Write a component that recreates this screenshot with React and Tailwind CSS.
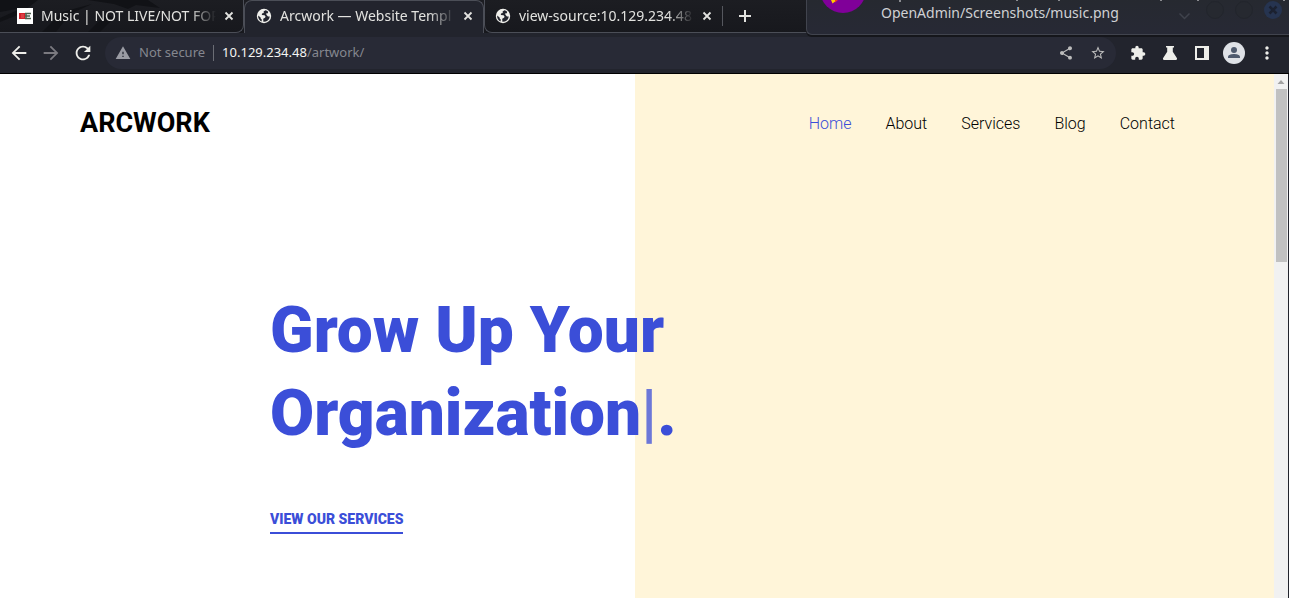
import React from "react";
import {
  MdArrowBack,
  MdArrowForward,
  MdRefresh,
  MdWarning,
  MdShare,
  MdStarBorder,
  MdExtension,
  MdMoreVert,
} from "react-icons/md";

function Globe() {
  return (
    <svg viewBox="0 0 16 16" className="size-4 shrink-0" aria-hidden="true">
      <circle cx="8" cy="8" r="7.2" fill="#f0f0ec" />
      <path
        d="M9.4 2.200 7.600 3.600 7.800 5 6 5.400 5.800 7 8.600 7.200 9.600 8.800 9 9.800 7.200 10.800 7.400 13.800A6 6 0 0 0 13.800 8.400L12 8.600 10.600 7 10 5.600 11.800 5.200 12.200 3.700A6 6 0 0 0 9.400 2.200ZM2.200 7.400A6 6 0 0 0 5.600 13.400L5.800 11.400 4.800 10.800 4.600 9.400Z"
        fill="#22242d"
      />
    </svg>
  );
}

function Favicon() {
  return (
    <svg viewBox="0 0 16 16" className="size-4 shrink-0" aria-hidden="true">
      <rect width="16" height="16" fill="#fff" />
      <path d="M2 5h6v6H2z" fill="#d3222a" />
      <path d="M4 7h3M4 9h3" stroke="#e77a7a" strokeWidth=".7" />
      <path d="M8 5.500h6M8 8h5M8 10.500h6M9 5v6" stroke="#4b5f4d" strokeWidth="1.500" />
    </svg>
  );
}

function Tab({ title, icon, active, className }) {
  return (
    <div
      className={
        "flex h-full items-center " +
        (active
          ? "rounded-t-lg border-x border-t border-[#4b4e57] bg-[#22242d] pb-0.5 "
          : "border-b border-[#4b4e57] ") +
        className
      }
    >
      {icon}
      <button
        role="tab"
        aria-selected={active}
        className="ml-2 w-[175px] overflow-hidden text-left whitespace-nowrap mask-r-from-85%"
      >
        {title}
      </button>
      <button aria-label="Close tab" className="ml-2">
        <svg viewBox="0 0 10 10" className="size-2.5" aria-hidden="true">
          <path d="M1.500 1.500l7 7m0-7l-7 7" stroke="currentColor" strokeWidth="1.800" />
        </svg>
      </button>
    </div>
  );
}

function Notification() {
  return (
    <div
      role="status"
      className="absolute top-0 right-0 h-[35px] w-[483px] overflow-hidden rounded-bl-md border-b border-l border-[#41444e] bg-linear-to-b from-[#262930] to-[#272935] shadow-[0_2px_0_#15161b]"
    >
      <svg viewBox="0 0 483 34" className="absolute top-0 left-0 h-[34px] w-[483px]" aria-hidden="true">
        <circle cx="36" cy="-10" r="23" fill="#800099" />
        <path d="M24 0h6l-4.500 3.500z" fill="#ffcc00" />
        <path d="M28 0h3l-3 2.500z" fill="#f03a20" />
        <path d="M92 0h2v2h-2zM209 0h2v1h-2zM251 0h2v1h-2zM353 0h2v1h-2zM390 0h2v1h-2zM476 0h2v1h-2z" fill="#8a8b90" />
        <path d="M372.500 13.500l5 5 5-5" fill="none" stroke="#3f424c" strokeWidth="1.500" />
        <circle cx="408" cy="10" r="8.500" fill="#262930" stroke="#22252c" />
        <circle cx="437" cy="10" r="8.500" fill="#262930" stroke="#22252c" />
        <circle cx="466" cy="10" r="9" fill="#263450" />
        <path d="M462.500 6.500l7 7m0-7l-7 7" stroke="#1b2130" strokeWidth="2.500" />
      </svg>
      <p className="relative mt-[3px] ml-[74px] text-sm text-[#d0d1d4]">
        OpenAdmin/Screenshots/music.png
      </p>
    </div>
  );
}

function TabStrip() {
  return (
    <div role="tablist" className="relative flex h-[33px] bg-linear-to-b from-[#1c1d22] to-[#17181d] text-sm text-[#e2e2df]">
      <svg viewBox="0 0 244 32" className="absolute top-0 left-0 h-8 w-[244px]" aria-hidden="true">
        <path d="M0 0h38L20 14 0 22V18L22 8 0 12zM42 32L62 12 92 4 70 14 56 32zM88 0h60l12 8-24-3-8 4-14-5zM88 32l18-18 8 4-14 14z" fill="#111216" />
      </svg>
      <Tab title="Music | NOT LIVE/NOT FOR" icon={<Favicon />} active={false} className="relative w-[244px] shrink-0 rounded-br-lg border-r pl-[17px]" />
      <Tab title="Arcwork — Website Templ" icon={<Globe />} active className="w-[240px] shrink-0 pl-[11px]" />
      <Tab title="view-source:10.129.234.48" icon={<Globe />} active={false} className="w-[238px] shrink-0 rounded-bl-lg border-l pl-[10px]" />
      <div className="flex grow items-center border-b border-[#4b4e57]">
        <span className="h-5 w-px bg-[#55575e]" />
        <button aria-label="New tab" className="ml-4">
          <svg viewBox="0 0 12 12" className="size-3" aria-hidden="true">
            <path d="M0 6h12M6 0v12" stroke="currentColor" strokeWidth="2" />
          </svg>
        </button>
      </div>
    </div>
  );
}

function Toolbar() {
  return (
    <div className="flex h-[41px] items-center border-b border-black bg-[#22242d] pr-3 pl-2 text-[#eeeeea]">
      <button aria-label="Back"><MdArrowBack className="size-[22px]" /></button>
      <button aria-label="Forward" className="ml-2.5 text-[#7b7a80]"><MdArrowForward className="size-[22px]" /></button>
      <button aria-label="Reload" className="ml-2.5"><MdRefresh className="size-[22px]" /></button>
      <div className="ml-[11px] flex h-8 grow items-center rounded-full bg-[#282a36] px-2.5 text-[13px]">
        <MdWarning className="size-4 text-[#9a9ba3]" />
        <span className="ml-2 text-[#85878f]">Not secure</span>
        <span className="mx-2 h-4 w-px bg-[#6b6d75]" />
        <a href="#top" className="grow text-[#85878f]">
          <span className="text-[#f4f4f2]">10.129.234.48</span>/artwork/
        </a>
        <button aria-label="Share" className="text-[#bcbcbc]"><MdShare className="size-4" /></button>
        <button aria-label="Bookmark" className="ml-4 text-[#bcbcbc]"><MdStarBorder className="size-4" /></button>
      </div>
      <button aria-label="Extensions" className="ml-3.5"><MdExtension className="size-4" /></button>
      <button aria-label="Experiments" className="ml-4">
        <svg viewBox="0 0 16 16" className="size-4" fill="currentColor" aria-hidden="true">
          <path d="M4 1h8v1.500h-1.200v4.200L15 13.200q.6 1.800-1.200 1.800H2.200Q.4 15 1 13.200L5.200 6.700V2.500H4z" />
        </svg>
      </button>
      <button aria-label="Side panel" className="ml-4">
        <svg viewBox="0 0 16 16" className="size-4" fill="currentColor" fillRule="evenodd" aria-hidden="true">
          <path d="M1 1h14v14H1zM3 3v10h7V3z" />
        </svg>
      </button>
      <button aria-label="Profile" className="ml-[13px]">
        <svg viewBox="0 0 22 22" className="size-[22px]" aria-hidden="true">
          <circle cx="11" cy="11" r="11" fill="#dee1e6" />
          <circle cx="11" cy="8" r="3" fill="#4e5a6e" />
          <path d="M5 16v-1c0-2.200 3.500-3 6-3s6 .8 6 3v1z" fill="#4e5a6e" />
        </svg>
      </button>
      <button aria-label="Menu" className="ml-3"><MdMoreVert className="size-5" /></button>
    </div>
  );
}

const links = ["Home", "About", "Services", "Blog", "Contact"];

function Page() {
  return (
    <main
      id="top"
      className="grow bg-[linear-gradient(to_right,#ffffff_calc(50%-2px),#fff5d9_calc(50%-2px))] font-['Roboto',sans-serif]"
    >
      <header className="flex items-center justify-between pt-7 pr-[99px] pl-20">
        <a href="#top" className="text-[27px] leading-[42px] font-bold text-black">ARCWORK</a>
        <nav className="flex gap-[34px] pt-0.5 text-base font-light text-black">
          {links.map((label, i) => (
            <a key={label} href="#top" className={i === 0 ? "text-[#3b4ed8]" : ""}>{label}</a>
          ))}
        </nav>
      </header>
      <section className="pt-[145px] pl-[270px] text-[#3b4ed8]">
        <h1 className="text-[64px] leading-[83px] font-black">
          Grow Up Your
          <br />
          Organization<span className="font-bold opacity-75">|</span>.
        </h1>
        <a href="#top" className="mt-[54px] inline-block border-b-2 border-current pb-[3px] text-sm font-black">
          VIEW OUR SERVICES
        </a>
      </section>
    </main>
  );
}

function Scrollbar() {
  return (
    <div className="flex w-[15px] shrink-0 flex-col items-center border-r border-[#22242d] bg-[#f1f1f1]" aria-hidden="true">
      <svg viewBox="0 0 14 15" className="h-[15px] w-3.5">
        <path d="M3.500 10L7 6l3.500 4z" fill="#a3a3a3" />
      </svg>
      <div className="h-[173px] w-[11px] bg-[#c1c1c1]" />
    </div>
  );
}

export default function App() {
  return (
    <div className="relative flex h-screen flex-col overflow-hidden font-['Noto_Sans',sans-serif]">
      <TabStrip />
      <Toolbar />
      <div className="flex grow">
        <Page />
        <Scrollbar />
      </div>
      <Notification />
    </div>
  );
}
